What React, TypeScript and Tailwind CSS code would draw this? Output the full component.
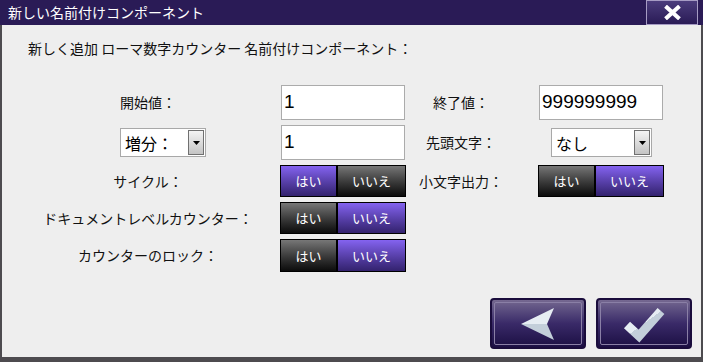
import React from "react"

const jp = { fontFamily: '"Noto Sans CJK JP", "Noto Sans", sans-serif' }
const num = { fontFamily: '"Liberation Sans", Arial, sans-serif' }

const Toggle = ({ on }: { on: "yes" | "no" }) => {
  const active = "bg-gradient-to-b from-[#8463f0] to-[#33226e]"
  const idle = "bg-gradient-to-b from-[#777777] to-[#0c0c0c]"
  return (
    <div className="flex w-[126px] h-full border border-black bg-black gap-[2px] text-white text-[13px]" style={jp}>
      <div className={`w-[55px] flex items-center justify-center ${on === "yes" ? active : idle}`}>はい</div>
      <div className={`flex-1 flex items-center justify-center ${on === "no" ? active : idle}`}>いいえ</div>
    </div>
  )
}

const Select = ({ text, w }: { text: string; w: string }) => (
  <div className={`flex items-center h-[29px] ${w} bg-white border border-[#a8a8a8] pl-[4px] pr-[1px]`}>
    <span className="flex-1 text-[16px] text-black leading-none" style={jp}>{text}</span>
    <div className="w-[16px] h-[25px] border border-[#707070] bg-gradient-to-b from-[#f4f4f4] to-[#c4c4c4] flex items-center justify-center">
      <svg width="7" height="4" viewBox="0 0 7 4"><path d="M0 0H7L3.5 4Z" fill="#000" /></svg>
    </div>
  </div>
)

const Input = ({ value }: { value: string }) => (
  <div className="h-full w-[124px] bg-white border border-[#ababab] flex items-center pl-[2px] text-[19px] text-black" style={num}>
    {value}
  </div>
)

const Label = ({ children, cls = "" }: { children: React.ReactNode; cls?: string }) => (
  <div className={`flex items-center justify-center text-[14px] text-[#111] ${cls}`} style={jp}>{children}</div>
)

const NavButton = ({ children }: { children: React.ReactNode }) => (
  <button className="w-[96px] h-[51px] rounded-[4px] border-2 border-[#1a0c3c] bg-gradient-to-b from-[#756890] via-[#3a2a68] to-[#1c0f44] p-[2px]">
    <div className="w-full h-full rounded-[2px] border border-[#8a7fa6] flex items-center justify-center">{children}</div>
  </button>
)

export default function App() {
  return (
    <div className="w-[703px] h-[362px] bg-[#4d4b4f] overflow-hidden">
      <div className="h-[25px] bg-[#2a1b56] flex items-center justify-between pl-[8px] pr-[5px]">
        <span className="text-white text-[14px]" style={jp}>新しい名前付けコンポーネント</span>
        <div className="w-[52px] h-[25px] border border-[#a69cc4] bg-gradient-to-b from-[#4b3c7c] to-[#2a1b56] flex items-center justify-center">
          <svg width="17" height="15" viewBox="0 0 17 15">
            <path d="M3 2.5L14 12.5M14 2.5L3 12.5" stroke="#fff" strokeWidth="4" strokeLinecap="square" />
          </svg>
        </div>
      </div>
      <div className="ml-[2px] w-[699px] h-[332px] bg-[#eeeeee] flex flex-col">
        <div className="pl-[26px] pt-[15px] text-[14px] text-[#111] leading-[16px]" style={jp}>
          新しく追加 ローマ数字カウンター 名前付けコンポーネント：
        </div>
        <div className="mt-[29px] ml-[18px] grid grid-cols-[261px_123px_135px_125px] grid-rows-[35px_35px_32px_32px_33px] gap-y-[5px]">
          <Label cls="pr-[5px]">開始値：</Label>
          <Input value="1" />
          <Label cls="pr-[21px]">終了値：</Label>
          <Input value="999999999" />

          <div className="flex items-center pl-[100px]"><Select text="増分：" w="w-[86px]" /></div>
          <Input value="1" />
          <Label cls="pr-[21px]">先頭文字：</Label>
          <div className="flex items-center pl-[12px]"><Select text="なし" w="w-[101px]" /></div>

          <Label cls="pr-[5px]">サイクル：</Label>
          <div className="-ml-[1px]"><Toggle on="yes" /></div>
          <Label cls="pr-[21px]">小文字出力：</Label>
          <div className="-ml-[1px]"><Toggle on="no" /></div>

          <Label cls="pr-[5px]">ドキュメントレベルカウンター：</Label>
          <div className="-ml-[1px]"><Toggle on="no" /></div>
          <div />
          <div />

          <Label cls="pr-[5px]">カウンターのロック：</Label>
          <div className="-ml-[1px]"><Toggle on="no" /></div>
        </div>
        <div className="mt-auto mb-[8px] mr-[9px] flex justify-end gap-[10px]">
          <NavButton>
            <svg width="40" height="34" viewBox="0 0 40 34">
              <defs>
                <linearGradient id="ga" x1="0" y1="0" x2="0" y2="1">
                  <stop offset="0.5" stopColor="#e6edf3" />
                  <stop offset="0.5" stopColor="#c3cfda" />
                </linearGradient>
              </defs>
              <path d="M3 17L36 1L29 17L36 33Z" fill="url(#ga)" />
            </svg>
          </NavButton>
          <NavButton>
            <svg width="46" height="38" viewBox="0 0 46 38">
              <defs>
                <linearGradient id="gc" x1="0" y1="0" x2="1" y2="1">
                  <stop offset="0.5" stopColor="#e6edf3" />
                  <stop offset="0.5" stopColor="#c3cfda" />
                </linearGradient>
              </defs>
              <path d="M6 20L18 31L40 6" fill="none" stroke="url(#gc)" strokeWidth="9" strokeLinejoin="miter" />
            </svg>
          </NavButton>
        </div>
      </div>
    </div>
  )
}
